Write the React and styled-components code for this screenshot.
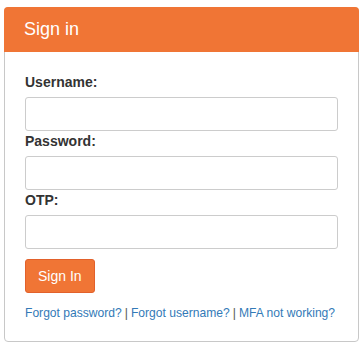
import styled, { createGlobalStyle } from "styled-components";

const Global = createGlobalStyle`
  body {
    margin: 0;
    background: #fff;
    font-family: "Liberation Sans", Arial, sans-serif;
    font-size: 14px;
    line-height: 20px;
    color: #333;
  }
`;

export default function App() {
  return (
    <Page>
      <Global />
      <Panel>
        <Heading>Sign in</Heading>
        <Body>
          <Label htmlFor="username">Username:</Label>
          <Input id="username" type="text" />
          <Label htmlFor="password">Password:</Label>
          <Input id="password" type="password" />
          <Label htmlFor="otp">OTP:</Label>
          <Input id="otp" type="text" />
          <Button type="button">Sign In</Button>
          <Links>
            <Link href="#">Forgot password?</Link>
            <Sep>|</Sep>
            <Link href="#">Forgot username?</Link>
            <Sep>|</Sep>
            <Link href="#">MFA not working?</Link>
          </Links>
        </Body>
      </Panel>
    </Page>
  );
}

const Page = styled.div`
  padding: 7px 5px 0 4px;
`;

const Panel = styled.div`
  width: 355px;
  box-sizing: border-box;
  border: 1px solid #c8c8c8;
  border-radius: 4px;
  background: #fff;
`;

const Heading = styled.div`
  background: #f07535;
  margin: -1px -1px 0;
  height: 45px;
  box-sizing: border-box;
  padding: 11px 20px;
  border-radius: 4px 4px 0 0;
  color: #fff;
  font-size: 18px;
  line-height: 22px;
`;

const Body = styled.div`
  padding: 20px 20px 18px;
  display: flex;
  flex-direction: column;
  align-items: flex-start;
`;

const Label = styled.label`
  font-weight: bold;
  margin-bottom: 5px;
`;

const Input = styled.input`
  width: 100%;
  height: 34px;
  box-sizing: border-box;
  border: 1px solid #ccc;
  border-radius: 3px;
  padding: 6px 12px;
  font: inherit;
  outline: none;
`;

const Button = styled.button`
  margin-top: 10px;
  height: 34px;
  padding: 6px 12px;
  font: inherit;
  color: #fff;
  background: #f07535;
  border: 1px solid #e2612b;
  border-radius: 3px;
`;

const Links = styled.div`
  margin-top: 10px;
  font-size: 12.1px;
  white-space: nowrap;
`;

const Link = styled.a`
  color: #337ab7;
  text-decoration: none;
`;

const Sep = styled.span`
  color: #555;
  margin: 0 3px;
`;
